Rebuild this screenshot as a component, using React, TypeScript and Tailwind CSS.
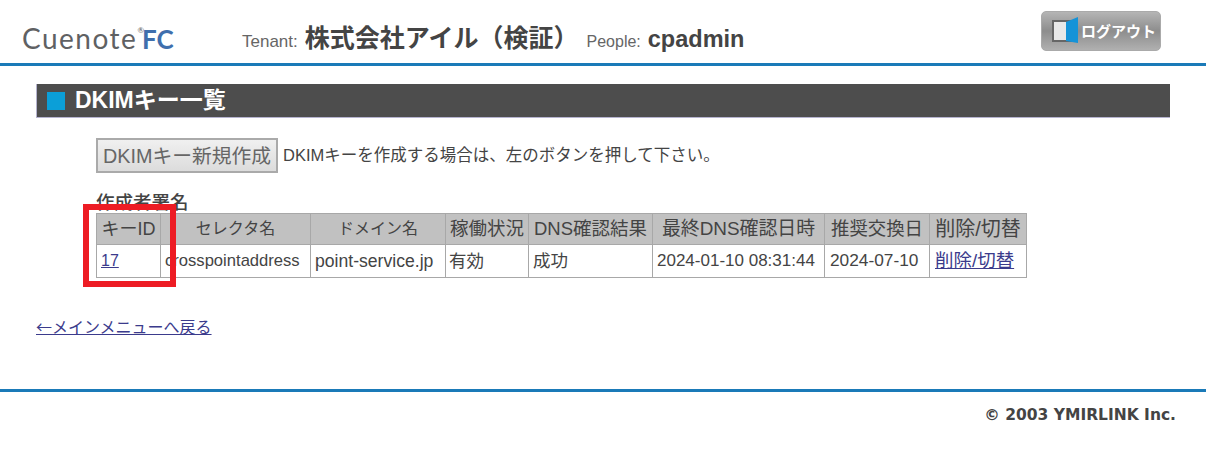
const jp = "font-['Liberation_Sans','Noto_Sans_CJK_JP',sans-serif]";

const headers = [
  { t: "キーID", w: "w-[64px]", s: "text-[18px]" },
  { t: "セレクタ名", w: "w-[150px]", s: "text-[16px]" },
  { t: "ドメイン名", w: "w-[135px]", s: "text-[16px]" },
  { t: "稼働状況", w: "w-[83px]", s: "text-[18.5px]" },
  { t: "DNS確認結果", w: "w-[124px]", s: "text-[18.5px]" },
  { t: "最終DNS確認日時", w: "w-[172px]", s: "text-[18.9px]" },
  { t: "推奨交換日", w: "w-[105px]", s: "text-[18.4px]" },
  { t: "削除/切替", w: "w-[97px]", s: "text-[20px]" },
];

const cells = [
  { t: "crosspointaddress", s: "text-[16.6px] pl-[4px]" },
  { t: "point-service.jp", s: "text-[17.6px] pl-[4px]" },
  { t: "有効", s: "text-[17.5px] pl-[3px]" },
  { t: "成功", s: "text-[17.5px] pl-[4px]" },
  { t: "2024-01-10 08:31:44", s: "text-[17px] pl-[4px]" },
  { t: "2024-07-10", s: "text-[17.3px] pl-[5px]" },
];

function LogoutIcon() {
  return (
    <svg width="28" height="30" viewBox="0 0 28 30" className="shrink-0">
      <rect x="1" y="5" width="20" height="20" fill="#e8e8e8" stroke="#666" strokeWidth="2" />
      <path d="M14 6 L26 1 V27 L14 25 Z" fill="#1593d8" />
    </svg>
  );
}

export default function App() {
  return (
    <div className={`${jp} relative w-[1206px] h-[462px] bg-white text-[#444] overflow-hidden`}>
      <header className="h-[66px] border-b-[3px] border-[#1a7ab8] flex items-start">
        <div className="w-[242px] shrink-0 pl-[22px] pt-[22px] flex items-baseline leading-[32px]">
          <span className="font-['Lato',sans-serif] text-[28px] tracking-[1.5px] text-[#5f6163] leading-[32px]">Cuenote</span>
          <span className="font-['Lato',sans-serif] text-[8px] text-[#5f6163] self-start leading-[16px] -mr-[2px]">®</span>
          <span className="font-['Lato',sans-serif] text-[26px] font-bold text-[#3f6fad] leading-[32px]">FC</span>
        </div>
        <div className="flex items-baseline pt-[21px] leading-[34px] whitespace-nowrap">
          <span className="text-[17px] font-light text-[#666]">Tenant:</span>
          <span className="text-[25px] font-bold ml-[7px] text-[#444]">株式会社アイル（検証）</span>
          <span className="text-[16px] text-[#666] ml-[8px]">People:</span>
          <span className="text-[23.5px] font-bold ml-[7px] text-[#444]">cpadmin</span>
        </div>
        <div className="ml-auto mr-[45px] mt-[11px] w-[120px] h-[40px] rounded-[5px] border border-[#aaa] bg-gradient-to-b from-[#b5b5b5] via-[#8d8d8d] to-[#b0b0b0] flex items-center pl-[10px] gap-[1px]">
          <LogoutIcon />
          <span className="text-[15px] font-bold text-white whitespace-nowrap font-['Noto_Sans_CJK_JP',sans-serif]">ログアウト</span>
        </div>
      </header>

      <main className="pl-[36px] pr-[36px] pt-[18px]">
        <h1 className="h-[34px] bg-[#4d4d4d] border-l border-b border-[#b5b3cf] flex items-center pl-[10px] gap-[10px]">
          <span className="w-[18px] h-[18px] bg-[#0b9fd8]" />
          <span className="text-[23px] font-bold text-white">DKIMキー一覧</span>
        </h1>

        <div className="ml-[60px] mt-[20px] flex items-center h-[35px]">
          <button className="h-[35px] w-[182px] border-2 border-[#aaa] bg-gradient-to-b from-[#f0f0f0] to-[#dcdcdc] text-[19.8px] leading-[30px] text-[#666] whitespace-nowrap">
            DKIMキー新規作成
          </button>
          <span className="ml-[5px] text-[16.5px] text-[#444]">DKIMキーを作成する場合は、左のボタンを押して下さい。</span>
        </div>

        <h2 className="ml-[60px] mt-[18px] h-[22px] text-[18.5px] font-medium text-[#444] leading-[23px]">作成者署名</h2>

        <table className="ml-[60px] border-collapse table-fixed w-[930px]">
          <thead>
            <tr className="h-[31px] bg-[#c1c1c1]">
              {headers.map((h) => (
                <th key={h.t} className={`${h.w} ${h.s} border border-[#a8a8a8] p-0 font-normal text-[#444] text-center whitespace-nowrap`}>
                  {h.t}
                </th>
              ))}
            </tr>
          </thead>
          <tbody>
            <tr className="h-[33px]">
              <td className="border border-[#a8a8a8] pl-[4px] text-[16px]">
                <a href="#" className="text-[#3b3b8c] underline">17</a>
              </td>
              {cells.map((c) => (
                <td key={c.t} className={`${c.s} border border-[#a8a8a8] text-[#444] whitespace-nowrap`}>
                  {c.t}
                </td>
              ))}
              <td className="border border-[#a8a8a8] pl-[5px] text-[18.5px] whitespace-nowrap">
                <a href="#" className="text-[#3b3b8c] underline">削除/切替</a>
              </td>
            </tr>
          </tbody>
        </table>

        <a href="#" className="block mt-[36px] w-fit text-[16px] leading-[24px] text-[#3b3b8c] underline">
          <span className="font-['Noto_Sans_CJK_JP',sans-serif]">←</span>メインメニューへ戻る
        </a>
      </main>

      <footer className="mt-[49px] border-t-[3px] border-[#1a7ab8] pt-[11px] pr-[30px] text-right">
        <span className="font-['DejaVu_Sans',sans-serif] text-[15.5px] font-bold text-[#444]">© 2003 YMIRLINK Inc.</span>
      </footer>

      <div className="absolute left-[83px] top-[204px] w-[93px] h-[83px] border-[6px] border-[#ed1c24] pointer-events-none" />
    </div>
  );
}
